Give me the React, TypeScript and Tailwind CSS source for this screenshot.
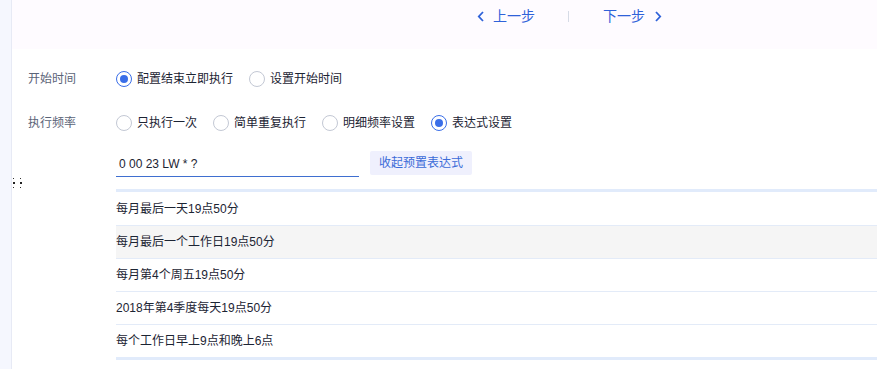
import {useState} from "react";

const font = "font-['Liberation_Sans','Noto_Sans_CJK_SC',sans-serif]";

function Radio({checked, label, onClick}: {checked: boolean; label: string; onClick: () => void}) {
    return (
        <button type="button" onClick={onClick} className="flex items-center gap-[5px] mr-[16px]">
            <span
                className={
                    checked
                        ? "w-[16px] h-[16px] rounded-full border border-[#3a6ee8] flex items-center justify-center bg-white"
                        : "w-[16px] h-[16px] rounded-full border border-[#c3c8d4] bg-white"
                }
            >
                {checked && <span className="w-[8px] h-[8px] rounded-full bg-[#3a6ee8]" />}
            </span>
            <span className="text-[12px] text-[#1c2433] leading-[16px]">{label}</span>
        </button>
    );
}

const presets = [
    "每月最后一天19点50分",
    "每月最后一个工作日19点50分",
    "每月第4个周五19点50分",
    "2018年第4季度每天19点50分",
    "每个工作日早上9点和晚上6点",
];

export default function App() {
    const [start, setStart] = useState("now");
    const [freq, setFreq] = useState("cron");
    const [hover, setHover] = useState(1);

    return (
        <div className={`flex w-[877px] h-[369px] bg-white ${font}`}>
            <div className="w-[12px] shrink-0 bg-[#f5f7fe] border-r border-[#e7eaf5]" />
            <div className="relative flex-1 flex flex-col">
                {/* nav */}
                <div className="h-[49px] shrink-0 bg-[#fefbff] flex items-start pt-[8px] pl-[465px] text-[14px] text-[#2f62d9]">
                    <button className="flex items-center h-[17px]">
                        <svg width="8" height="11" viewBox="0 0 8 11" className="mr-[8px]">
                            <polyline points="6,1 1.8,5.5 6,10" fill="none" stroke="#2f62d9" strokeWidth="1.8" />
                        </svg>
                        上一步
                    </button>
                    <span className="w-px h-[11px] bg-[#d6dbe6] mt-[3px] ml-[33px] mr-[34px]" />
                    <button className="flex items-center h-[17px]">
                        下一步
                        <svg width="8" height="11" viewBox="0 0 8 11" className="ml-[9px]">
                            <polyline points="2,1 6.2,5.5 2,10" fill="none" stroke="#2f62d9" strokeWidth="1.8" />
                        </svg>
                    </button>
                </div>

                {/* start time */}
                <div className="flex items-center mt-[22px] pl-[16px] h-[16px]">
                    <span className="w-[88px] text-[12px] text-[#5b6478]">开始时间</span>
                    <Radio checked={start === "now"} label="配置结束立即执行" onClick={() => setStart("now")} />
                    <Radio checked={start === "set"} label="设置开始时间" onClick={() => setStart("set")} />
                </div>

                {/* frequency */}
                <div className="flex items-center mt-[28px] pl-[16px] h-[16px]">
                    <span className="w-[88px] text-[12px] text-[#5b6478]">执行频率</span>
                    <Radio checked={freq === "once"} label="只执行一次" onClick={() => setFreq("once")} />
                    <Radio checked={freq === "simple"} label="简单重复执行" onClick={() => setFreq("simple")} />
                    <Radio checked={freq === "detail"} label="明细频率设置" onClick={() => setFreq("detail")} />
                    <Radio checked={freq === "cron"} label="表达式设置" onClick={() => setFreq("cron")} />
                </div>

                {/* expression */}
                <div className="flex items-start mt-[21px] pl-[104px]">
                    <div className="w-[243px] h-[25px] border-b border-[#3f6fd0] pl-[3px] pt-[3px] text-[12px] text-[#1c2433]">
                        0 00 23 LW * ?
                    </div>
                    <button className="ml-[11px] mt-[-1px] h-[24px] px-[9px] rounded-[2px] bg-[#eff0fd] text-[12px] text-[#3b6bd8]">
                        收起预置表达式
                    </button>
                </div>

                {/* presets */}
                <div className="ml-[104px] mt-[12px] border-t-[3px] border-b-[3px] border-[#e1ebfb]">
                    {presets.map((p, i) => (
                        <div
                            key={p}
                            onMouseEnter={() => setHover(i)}
                            className={
                                (i === hover ? "bg-[#f5f5f5] " : "bg-white ") +
                                (i > 0 ? "border-t border-[#e3ebf8] " : "") +
                                "h-[33px] flex items-center text-[12px] text-[#1c2433]"
                            }
                        >
                            {p}
                        </div>
                    ))}
                </div>

                {/* drag handle */}
                <div className="absolute left-[1px] top-[178px] grid grid-cols-2 gap-x-[5px] gap-y-[3px]">
                    <span className="w-px h-px bg-[#333]" />
                    <span className="w-px h-px bg-[#333]" />
                    <span className="w-[2px] h-[2px] bg-[#222]" />
                    <span className="w-[2px] h-[2px] bg-[#222]" />
                    <span className="w-px h-px bg-[#333]" />
                    <span className="w-px h-px bg-[#333]" />
                </div>
            </div>
        </div>
    );
}
